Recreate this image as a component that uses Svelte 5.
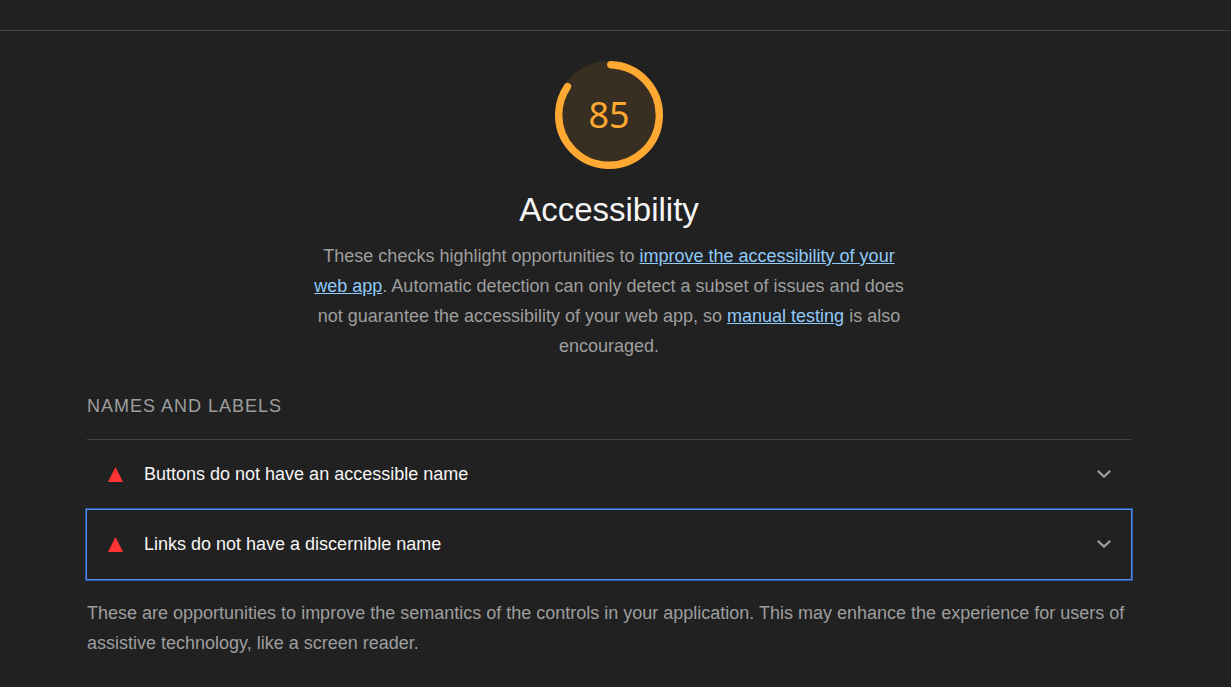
<script>
  const audits = [
    { title: 'Buttons do not have an accessible name', focused: false },
    { title: 'Links do not have a discernible name', focused: true }
  ];
  const score = 85;
  const circumference = 2 * Math.PI * 50;
  const arc = (score / 100) * circumference - 2;
</script>

<div class="report">
  <div class="topbar"></div>
  <main class="category">
    <header>
      <div class="gauge">
        <svg viewBox="0 0 108 108" aria-hidden="true">
          <circle cx="54" cy="54" r="54" fill="#382e22" />
          <circle
            cx="54" cy="54" r="50.3" fill="none" stroke="#ffa933" stroke-width="7.4"
            stroke-linecap="round" stroke-dasharray="{arc} 400" transform="rotate(-88 54 54)"
          />
        </svg>
        <span class="score">{score}</span>
      </div>
      <h1>Accessibility</h1>
      <p class="description">
        These checks highlight opportunities to <a href="#improve">improve the accessibility of your web app</a>. Automatic detection can only detect a subset of issues and does not guarantee the accessibility of your web app, so <a href="#manual">manual testing</a> is also encouraged.
      </p>
    </header>
    <section>
      <h2>Names and labels</h2>
      <div class="audits">
        {#each audits as audit}
          <button class="audit" class:focused={audit.focused} aria-expanded="false">
            <svg class="fail" viewBox="0 0 15 15" aria-hidden="true"><path d="M7.5 0 15 15H0z" fill="#ff3333" /></svg>
            <span>{audit.title}</span>
            <svg class="chevron" viewBox="0 0 14 8" aria-hidden="true"><path d="M.8.9 7 6.6 13.2.9" fill="none" stroke="#9e9e9e" stroke-width="2.2" /></svg>
          </button>
        {/each}
      </div>
      <p class="footnote">
        These are opportunities to improve the semantics of the controls in your application. This may enhance the experience for users of assistive technology, like a screen reader.
      </p>
    </section>
  </main>
</div>

<style>
  :global(body) {
    background: #212121;
  }
  .report {
    font-family: "Liberation Sans", Arial, sans-serif;
    font-size: 18px;
    line-height: 30px;
    color: #9e9e9e;
  }
  .topbar {
    height: 30px;
    border-bottom: 1px solid #424242;
  }
  .category {
    padding: 30px 100px 28px 87px;
  }
  header {
    display: flex;
    flex-direction: column;
    align-items: center;
    text-align: center;
  }
  .gauge {
    display: grid;
    place-items: center;
    width: 108px;
    height: 108px;
  }
  .gauge > * {
    grid-area: 1 / 1;
  }
  .score {
    font-family: "Noto Sans", sans-serif;
    font-size: 36px;
    color: #ffa933;
  }
  h1 {
    margin: 21px 0 11px;
    font-size: 33px;
    font-weight: 400;
    line-height: 40px;
    color: #f5f5f5;
  }
  p {
    margin: 0;
  }
  .description {
    max-width: 600px;
  }
  a {
    color: #90caf9;
  }
  h2 {
    margin: 30px 0 18px;
    font-size: 18px;
    font-weight: 400;
    letter-spacing: 1px;
    text-transform: uppercase;
  }
  .audits {
    display: grid;
    gap: 1px;
    border-top: 1px solid #424242;
  }
  .audit {
    display: flex;
    align-items: center;
    gap: 21px;
    width: 100%;
    height: 69px;
    padding: 0 20px 1px 21px;
    border: 0;
    background: none;
    color: #f5f5f5;
    font: inherit;
    text-align: left;
  }
  .focused {
    outline: 1px solid #4f8ef0;
    box-shadow: 0 0 0 2px #3059a0;
  }
  .fail {
    width: 15px;
    height: 15px;
  }
  .chevron {
    width: 14px;
    height: 8px;
    margin-left: auto;
  }
  .footnote {
    margin-top: 19px;
  }
</style>
